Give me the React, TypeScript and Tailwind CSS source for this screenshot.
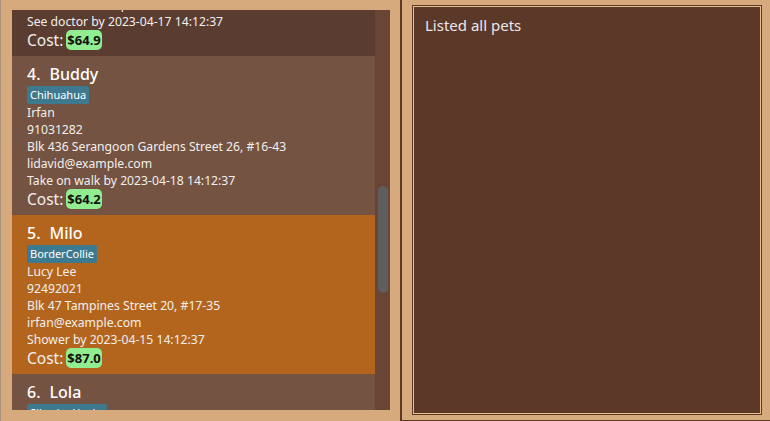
import React from "react";

type Pet = {
  idx: number;
  name: string;
  breed: string;
  owner: string;
  phone: string;
  address: string;
  email: string;
  task: string;
  cost: string;
  bg: string;
};

const pets: Pet[] = [
  {
    idx: 3,
    name: "Max",
    breed: "Beagle",
    owner: "Charlotte Oliveiro",
    phone: "93210283",
    address: "Blk 11 Ang Mo Kio Street 74, #11-04",
    email: "charlotte@example.com",
    task: "See doctor by 2023-04-17 14:12:37",
    cost: "$64.9",
    bg: "bg-[#5a3c30]",
  },
  {
    idx: 4,
    name: "Buddy",
    breed: "Chihuahua",
    owner: "Irfan",
    phone: "91031282",
    address: "Blk 436 Serangoon Gardens Street 26, #16-43",
    email: "lidavid@example.com",
    task: "Take on walk by 2023-04-18 14:12:37",
    cost: "$64.2",
    bg: "bg-[#745342]",
  },
  {
    idx: 5,
    name: "Milo",
    breed: "BorderCollie",
    owner: "Lucy Lee",
    phone: "92492021",
    address: "Blk 47 Tampines Street 20, #17-35",
    email: "irfan@example.com",
    task: "Shower by 2023-04-15 14:12:37",
    cost: "$87.0",
    bg: "bg-[#b3651e]",
  },
  {
    idx: 6,
    name: "Lola",
    breed: "SiberianHusky",
    owner: "Roy Balakrishnan",
    phone: "92624417",
    address: "Blk 45 Aljunied Street 85, #11-31",
    email: "royb@example.com",
    task: "Feed by 2023-04-16 14:12:37",
    cost: "$52.3",
    bg: "bg-[#745342]",
  },
];

const font = { fontFamily: '"Noto Sans", "Open Sans", sans-serif' };

function PetCard({ p }: { p: Pet }) {
  return (
    <div className={`${p.bg} h-[159px] pl-[15px] pt-[8px] pb-[6px] text-[#f2efed] flex flex-col`}>
      <div className="h-[22px] leading-[20px] text-[16px] font-medium text-white flex">
        <span>{p.idx}.</span>
        <span className="ml-[9px]">{p.name}</span>
      </div>
      <div className="h-[18px] flex">
        <span className="bg-[#3e7a8f] text-white text-[11px] leading-[18px] px-[3px] rounded-[2px]">
          {p.breed}
        </span>
      </div>
      <div className="text-[12.2px] leading-[17px]">{p.owner}</div>
      <div className="text-[12.2px] leading-[17px]">{p.phone}</div>
      <div className="text-[12.2px] leading-[17px]">{p.address}</div>
      <div className="text-[12.2px] leading-[17px]">{p.email}</div>
      <div className="text-[12.2px] leading-[17px]">{p.task}</div>
      <div className="h-[20px] flex items-center">
        <span className="text-[15.5px] leading-[20px]">Cost:</span>
        <span className="ml-[3px] bg-[#90ee90] text-[#111] font-bold text-[13px] leading-[20px] px-[1px] rounded-[5px]">
          {p.cost}
        </span>
      </div>
    </div>
  );
}

export default function App() {
  return (
    <div style={font} className="w-[770px] h-[421px] bg-[#d7aa7e] flex border-l border-[#a8927e] overflow-hidden">
      <div className="w-[399px] h-full pl-[11px] pt-[10px] pr-[10px] pb-[11px] flex">
        <div className="w-[363px] h-[400px] overflow-hidden">
          <div className="mt-[-113px]">
            {pets.map((p) => (
              <PetCard key={p.idx} p={p} />
            ))}
          </div>
        </div>
        <div className="w-[15px] h-[400px] bg-[#6a4535] pt-[176px] pl-[3px]">
          <div className="w-[10px] h-[107px] bg-[#5e5e5e] rounded-[5px]" />
        </div>
      </div>
      <div className="w-[2px] h-full bg-[#5e3a26]" />
      <div className="flex-1 h-full pl-[10px] pr-[8px] pt-[5px] pb-[5px] border-b border-[#5e3a26]">
        <div className="w-[350px] h-[410px] border border-[#5e3a26]">
          <div className="w-full h-full border border-[#e6bd91] bg-[#5b3827] pl-[11px] pt-[7px]">
            <div className="text-[15px] leading-[22px] text-[#ece6ee]">Listed all pets</div>
          </div>
        </div>
      </div>
    </div>
  );
}
